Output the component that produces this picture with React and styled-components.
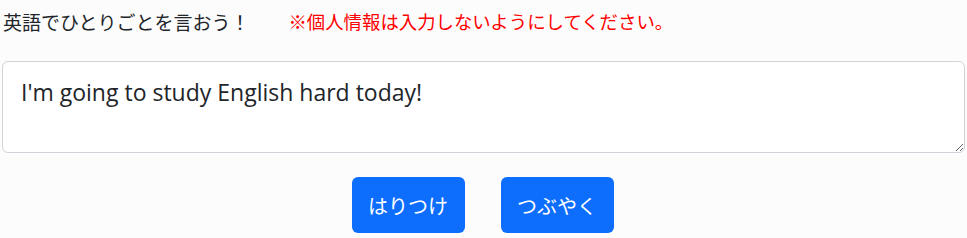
import React, { useState } from "react";
import styled, { createGlobalStyle } from "styled-components";

const GlobalStyle = createGlobalStyle`
  html, body {
    margin: 0;
    padding: 0;
    background-color: #fcfcfc;
  }
  body {
    font-family: "Noto Sans CJK JP", "Noto Sans", sans-serif;
    color: #212529;
  }
`;

const Wrapper = styled.div`
  padding: 0 2px;
  display: flex;
  flex-direction: column;
`;

const Header = styled.div`
  display: flex;
  align-items: center;
  height: 42px;
  padding-left: 1px;
  font-size: 19px;
`;

const Title = styled.span`
  color: #212529;
`;

const Notice = styled.span`
  color: #ff0000;
  font-size: 18.4px;
  margin-left: 39px;
`;

const TextArea = styled.textarea`
  margin-top: 19px;
  box-sizing: border-box;
  width: 100%;
  height: 92px;
  padding: 16px 18px 12px;
  font-family: "Open Sans", "Noto Sans", sans-serif;
  font-size: 23px;
  line-height: 1.3;
  color: #212529;
  background: #fff;
  border: 1px solid #ced4da;
  border-radius: 6px;
  outline: none;
  resize: vertical;
`;

const ButtonRow = styled.div`
  display: flex;
  justify-content: center;
  gap: 36px;
  margin-top: 24px;
  padding-right: 2px;
`;

const Button = styled.button`
  width: 113px;
  height: 56px;
  border: none;
  border-radius: 6px;
  background-color: #0d6efd;
  color: #fff;
  font-family: "Noto Sans CJK JP", "Noto Sans", sans-serif;
  font-size: 20px;
  cursor: pointer;
`;

export default function App() {
  const [text, setText] = useState("I'm going to study English hard today!");
  return (
    <>
      <GlobalStyle />
      <Wrapper>
        <Header>
          <Title>英語でひとりごとを言おう！</Title>
          <Notice>※個人情報は入力しないようにしてください。</Notice>
        </Header>
        <TextArea value={text} onChange={(e) => setText(e.target.value)} />
        <ButtonRow>
          <Button>はりつけ</Button>
          <Button>つぶやく</Button>
        </ButtonRow>
      </Wrapper>
    </>
  );
}
